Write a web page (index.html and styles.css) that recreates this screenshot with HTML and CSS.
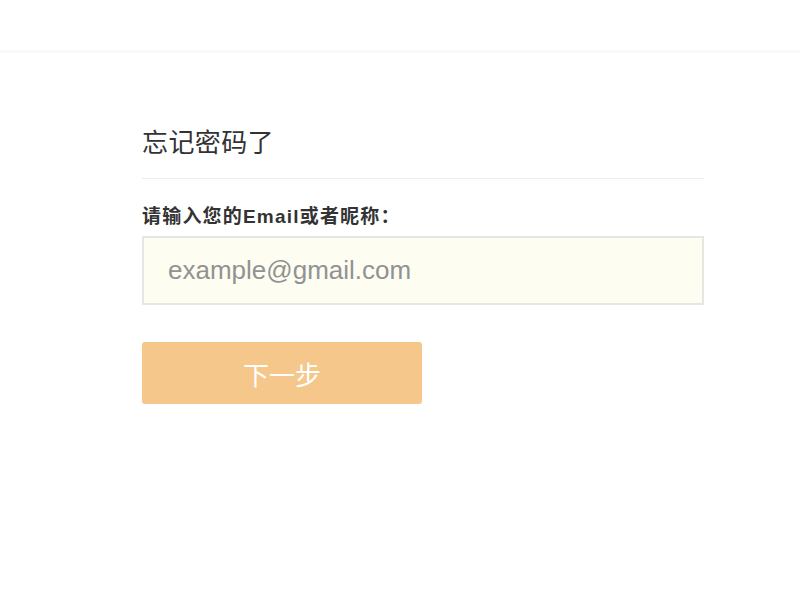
FILE: index.html
```html
<!DOCTYPE html>
<html lang="zh">
<head>
<meta charset="utf-8">
<title>忘记密码了</title>
<link rel="stylesheet" href="styles.css">
</head>
<body>
<div class="topbar"></div>
<main class="panel">
  <h1 class="title">忘记密码了</h1>
  <form class="form">
    <label class="label" for="email">请输入您的Email或者昵称：</label>
    <input class="input" id="email" type="text" placeholder="example@gmail.com">
    <button class="btn" type="button">下一步</button>
  </form>
</main>
</body>
</html>
```
FILE: styles.css
```css
html, body {
  margin: 0;
  padding: 0;
  background: #ffffff;
  font-family: "Liberation Sans", "Noto Sans CJK SC", sans-serif;
}
.topbar {
  height: 50px;
  border-bottom: 3px solid #fafafa;
}
.panel {
  width: 562px;
  margin: 0 0 0 142px;
  padding-top: 73px;
}
.title {
  margin: 0;
  font-size: 26px;
  font-weight: normal;
  color: #333;
  line-height: 34px;
  letter-spacing: 0.4px;
  padding-bottom: 18px;
  border-bottom: 1px solid #ececec;
}
.form {
  display: flex;
  flex-direction: column;
  align-items: flex-start;
}
.label {
  margin-top: 25px;
  font-size: 19px;
  font-weight: bold;
  color: #333;
  line-height: 26px;
  letter-spacing: 1.2px;
}
.input {
  box-sizing: border-box;
  margin-top: 6px;
  width: 562px;
  height: 69px;
  border: 2px solid #e6e6e2;
  background: #fdfdf1;
  padding: 0 24px;
  font-family: "Liberation Sans", "Noto Sans CJK SC", sans-serif;
  font-size: 26px;
  color: #333;
  outline: none;
}
.input::placeholder {
  color: #929292;
}
.btn {
  margin-top: 37px;
  width: 280px;
  height: 62px;
  border: none;
  border-radius: 3px;
  background: #f6c78b;
  color: #ffffff;
  font-family: "Noto Sans CJK SC", sans-serif;
  font-size: 26px;
}
```
